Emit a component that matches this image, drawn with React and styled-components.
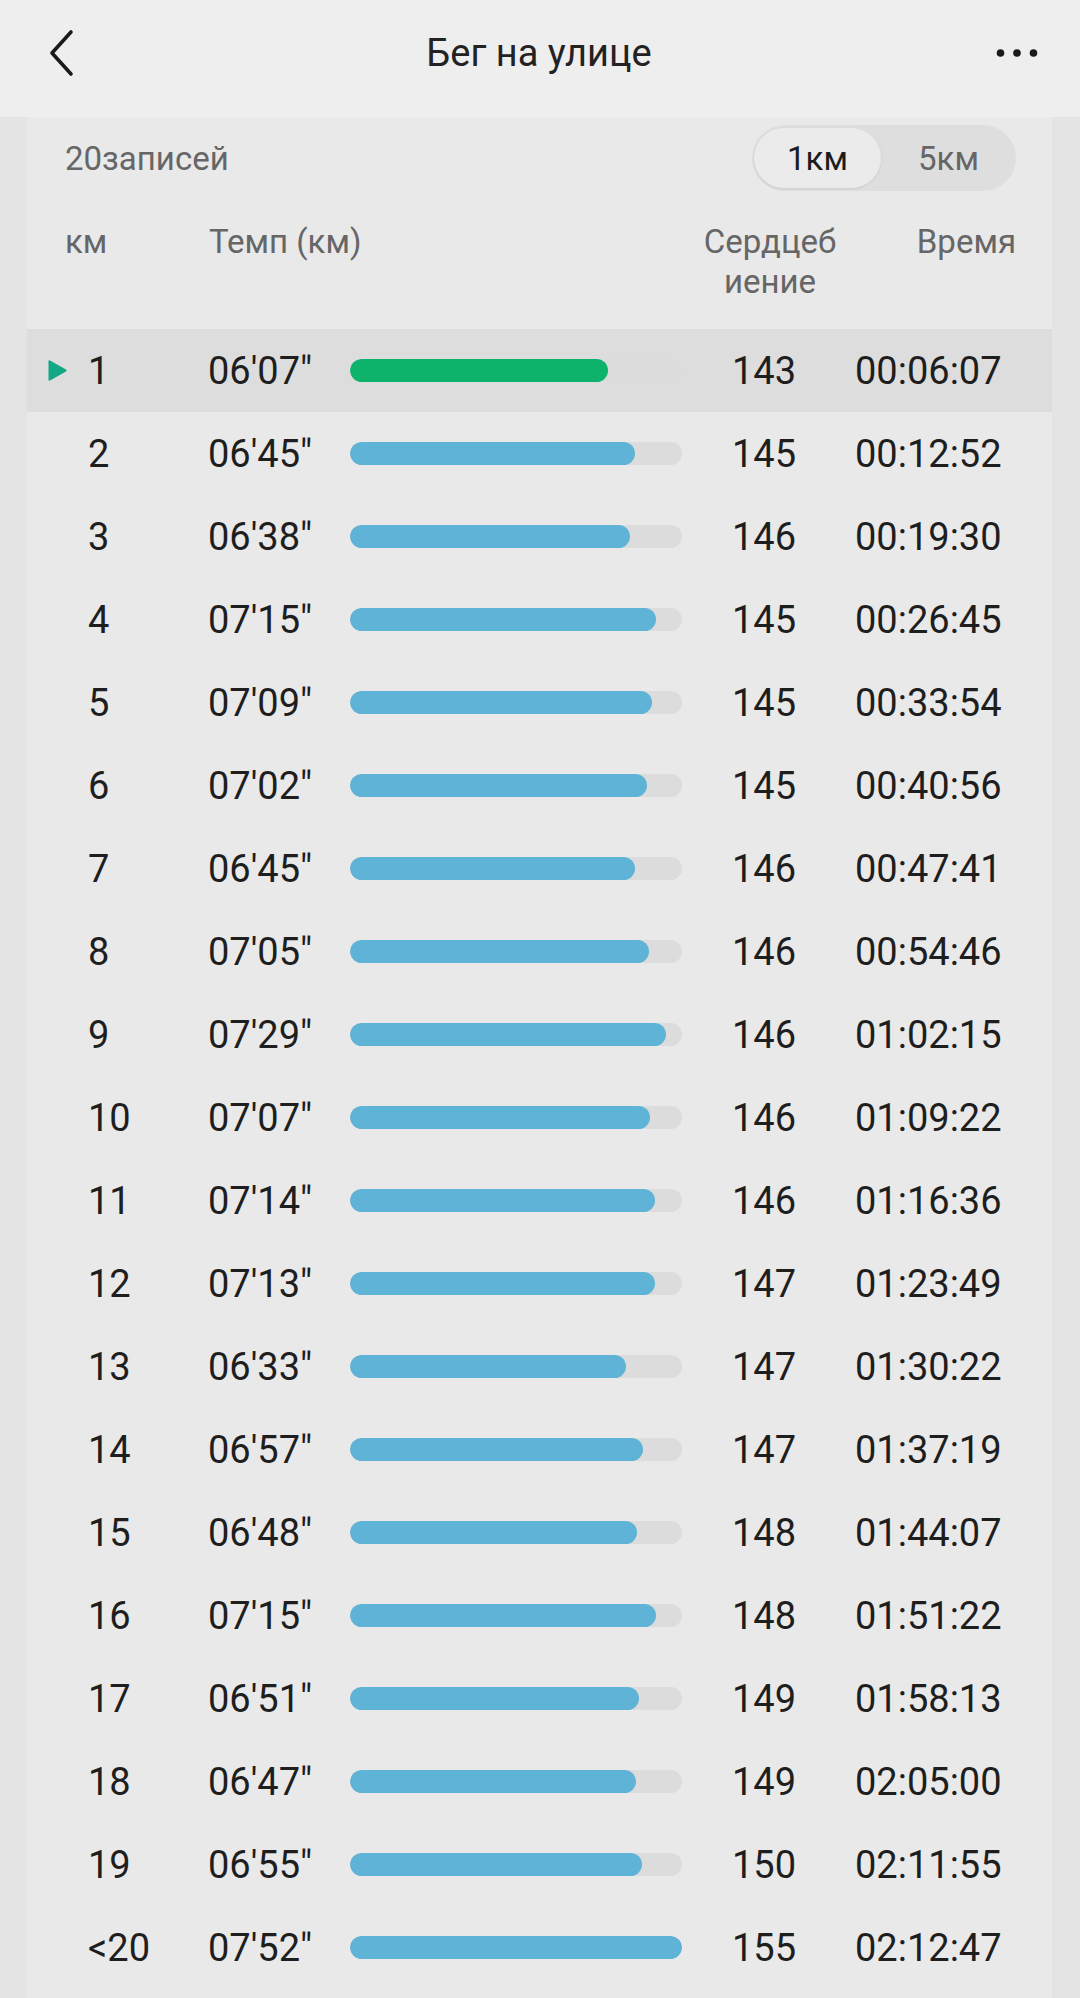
import React from "react";
import styled, { createGlobalStyle } from "styled-components";

const GlobalStyle = createGlobalStyle`
  html, body {
    margin: 0;
    padding: 0;
    background: #e4e4e4;
    font-family: Roboto, "Noto Sans", "Liberation Sans", sans-serif;
  }
`;

const splits = [
  { km: "1", pace: "06'07\"", sec: 367, hr: 143, time: "00:06:07" },
  { km: "2", pace: "06'45\"", sec: 405, hr: 145, time: "00:12:52" },
  { km: "3", pace: "06'38\"", sec: 398, hr: 146, time: "00:19:30" },
  { km: "4", pace: "07'15\"", sec: 435, hr: 145, time: "00:26:45" },
  { km: "5", pace: "07'09\"", sec: 429, hr: 145, time: "00:33:54" },
  { km: "6", pace: "07'02\"", sec: 422, hr: 145, time: "00:40:56" },
  { km: "7", pace: "06'45\"", sec: 405, hr: 146, time: "00:47:41" },
  { km: "8", pace: "07'05\"", sec: 425, hr: 146, time: "00:54:46" },
  { km: "9", pace: "07'29\"", sec: 449, hr: 146, time: "01:02:15" },
  { km: "10", pace: "07'07\"", sec: 427, hr: 146, time: "01:09:22" },
  { km: "11", pace: "07'14\"", sec: 434, hr: 146, time: "01:16:36" },
  { km: "12", pace: "07'13\"", sec: 433, hr: 147, time: "01:23:49" },
  { km: "13", pace: "06'33\"", sec: 393, hr: 147, time: "01:30:22" },
  { km: "14", pace: "06'57\"", sec: 417, hr: 147, time: "01:37:19" },
  { km: "15", pace: "06'48\"", sec: 408, hr: 148, time: "01:44:07" },
  { km: "16", pace: "07'15\"", sec: 435, hr: 148, time: "01:51:22" },
  { km: "17", pace: "06'51\"", sec: 411, hr: 149, time: "01:58:13" },
  { km: "18", pace: "06'47\"", sec: 407, hr: 149, time: "02:05:00" },
  { km: "19", pace: "06'55\"", sec: 415, hr: 150, time: "02:11:55" },
  { km: "<20", pace: "07'52\"", sec: 472, hr: 155, time: "02:12:47" },
];

const maxSec = Math.max(...splits.map((s) => s.sec));

const Page = styled.div`
  width: 1080px;
  min-height: 1998px;
  overflow: hidden;
`;

const TopBar = styled.header`
  height: 117px;
  background: #eeeeee;
  display: flex;
  align-items: center;
  justify-content: space-between;
  padding: 0 42px 12px 40px;
  box-sizing: border-box;
`;

const IconButton = styled.button`
  border: none;
  background: none;
  padding: 0;
  width: 42px;
  height: 50px;
  display: flex;
  align-items: center;
  justify-content: center;
  color: #1a1a1a;
`;

const Title = styled.h1`
  margin: 0;
  font-size: 38px;
  font-weight: 400;
  color: #222;
`;

const Card = styled.section`
  margin: 0 28px 0 27px;
  background: #e9e9e9;
  min-height: 1881px;
`;

const Summary = styled.div`
  display: flex;
  align-items: center;
  justify-content: space-between;
  padding: 0 36px 0 38px;
  height: 82px;
`;

const Count = styled.span`
  font-size: 33px;
  color: #666;
`;

const Toggle = styled.div`
  display: flex;
  width: 264px;
  height: 66px;
  border-radius: 33px;
  background: #dedede;
  padding: 3px 0 3px 2px;
  box-sizing: border-box;
`;

const ToggleOption = styled.button`
  flex: ${({ active }) => (active ? "0 0 127px" : "1")};
  border: none;
  border-radius: 31px;
  font-family: inherit;
  font-size: 33px;
  padding: 0;
  color: ${({ active }) => (active ? "#1c1c1c" : "#666")};
  background: ${({ active }) => (active ? "#ebebeb" : "transparent")};
  box-shadow: ${({ active }) =>
    active ? "0 1px 3px rgba(0, 0, 0, 0.08)" : "none"};
`;

const HeadRow = styled.div`
  display: grid;
  grid-template-columns: 144px 479px 164px 1fr;
  align-items: start;
  padding: 23px 36px 0 38px;
  height: 130px;
  box-sizing: border-box;
  font-size: 33px;
  line-height: 40px;
  color: #666;
`;

const HeadCell = styled.div`
  text-align: ${({ align }) => align || "left"};
  white-space: nowrap;
`;

const Row = styled.div`
  display: grid;
  grid-template-columns: 41px 120px 142px 332px 164px 1fr;
  align-items: center;
  height: 83px;
  padding-left: 20px;
  background: ${({ active }) => (active ? "#dddddd" : "transparent")};
  font-size: 38px;
  color: #1e1e1e;
`;

const Marker = styled.span`
  display: flex;
  align-items: center;
`;

const Cell = styled.span`
  text-align: ${({ align }) => align || "left"};
  padding-left: ${({ pad }) => pad || 0}px;
  white-space: nowrap;
`;

const Track = styled.div`
  height: 23px;
  border-radius: 12px;
  background: #dcdcdc;
  overflow: hidden;
`;

const Fill = styled.div`
  height: 100%;
  border-radius: 12px;
  background: ${({ active }) => (active ? "#0db36a" : "#5eb3d6")};
`;

const Chevron = () => (
  <svg width="28" height="48" viewBox="0 0 28 48" fill="none">
    <path
      d="M24 3 L5 24 L24 45"
      stroke="currentColor"
      strokeWidth="3.6"
      strokeLinecap="round"
      strokeLinejoin="round"
    />
  </svg>
);

const Dots = () => (
  <svg width="42" height="10" viewBox="0 0 42 10">
    <circle cx="4.5" cy="5" r="3.8" fill="#1a1a1a" />
    <circle cx="21" cy="5" r="3.8" fill="#1a1a1a" />
    <circle cx="37.5" cy="5" r="3.8" fill="#1a1a1a" />
  </svg>
);

const Play = () => (
  <svg width="21" height="25" viewBox="0 0 21 25">
    <path
      d="M3 2.5 Q1.5 1.8 1.5 3.6 L1.5 21.4 Q1.5 23.2 3 22.5 L19 13.6 Q20.4 12.5 19 11.4 Z"
      fill="#12a886"
    />
  </svg>
);

export default function App() {
  return (
    <Page>
      <GlobalStyle />
      <TopBar>
        <IconButton aria-label="Назад">
          <Chevron />
        </IconButton>
        <Title>Бег на улице</Title>
        <IconButton aria-label="Ещё">
          <Dots />
        </IconButton>
      </TopBar>
      <Card>
        <Summary>
          <Count>20записей</Count>
          <Toggle>
            <ToggleOption active>1км</ToggleOption>
            <ToggleOption>5км</ToggleOption>
          </Toggle>
        </Summary>
        <HeadRow>
          <HeadCell>км</HeadCell>
          <HeadCell>Темп (км)</HeadCell>
          <HeadCell align="center">
            Сердцеб
            <br />
            иение
          </HeadCell>
          <HeadCell align="right">Время</HeadCell>
        </HeadRow>
        {splits.map((s, i) => (
          <Row key={s.km} active={i === 0}>
            <Marker>{i === 0 && <Play />}</Marker>
            <Cell>{s.km}</Cell>
            <Cell>{s.pace}</Cell>
            <Track>
              <Fill
                active={i === 0}
                style={{ width: `${(s.sec / maxSec) * 100}%` }}
              />
            </Track>
            <Cell align="center">{s.hr}</Cell>
            <Cell pad={9}>{s.time}</Cell>
          </Row>
        ))}
      </Card>
    </Page>
  );
}
